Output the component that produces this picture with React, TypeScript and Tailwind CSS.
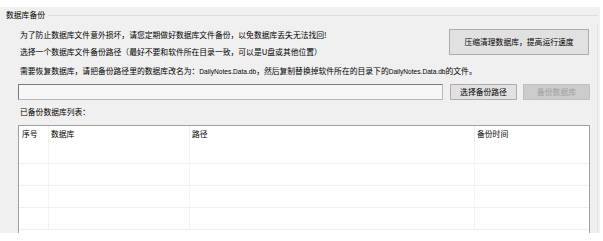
import React from 'react';

const cjk = { fontFamily: '"Noto Sans CJK SC", "Microsoft YaHei", sans-serif' };

function Latin({ children }: { children: React.ReactNode }) {
  return <span className="text-[6.6px] font-['Liberation_Sans',sans-serif]">{children}</span>;
}

const rows = [0, 1, 2, 3];

export default function App() {
  return (
    <div className="w-[603px] h-[241px] bg-white pt-[7px] overflow-hidden text-[#000]" style={cjk}>
      <div className="w-[600px] h-[226px] bg-[#f0f0f0] flex flex-col overflow-hidden text-[7.8px]">
        {/* group title */}
        <div className="h-[16px] flex items-center">
          <span className="pl-[6px] pr-[3px] leading-[16px]">数据库备份</span>
          <div className="flex-1 border-t border-[#dcdcdc] mr-[2px]" />
        </div>

        <div className="flex flex-col border-r border-[#e3e3e3] mr-[2px] flex-1">
          {/* intro + compact button */}
          <div className="flex">
            <div className="flex-1 flex flex-col pl-[20px] pt-[4px]">
              <div className="h-[16px] leading-[16px]">为了防止数据库文件意外损坏，请您定期做好数据库文件备份，以免数据库丢失无法找回!</div>
              <div className="h-[16px] leading-[16px] mt-[1px]">选择一个数据库文件备份路径（最好不要和软件所在目录一致，可以是U盘或其他位置）</div>
            </div>
            <button className="mt-[6px] mr-[8px] w-[140px] h-[26px] bg-[#e1e1e1] border border-[#adadad] text-[7.8px] text-[#000]">
              压缩清理数据库，提高运行速度
            </button>
          </div>

          <div className="h-[16px] leading-[16px] pl-[20px] mt-[3px] whitespace-nowrap">
            需要恢复数据库，请把备份路径里的数据库改名为：<Latin>DailyNotes.Data.db</Latin>，然后复制替换掉软件所在的目录下的<Latin>DailyNotes.Data.db</Latin>的文件。
          </div>

          {/* path input row */}
          <div className="flex items-center pl-[18px] mt-[5px]">
            <div className="w-[425px] h-[16px] bg-[#f7f7f7] border border-[#7a7a7a] border-b-[#b9b9b9] border-r-[#b9b9b9]" />
            <button className="ml-[7px] w-[67px] h-[16px] bg-[#e1e1e1] border border-[#adadad] text-[7.8px] leading-[14px] text-[#000]">
              选择备份路径
            </button>
            <button className="ml-[6px] w-[67px] h-[16px] bg-[#cccccc] border border-[#bfbfbf] text-[7.8px] leading-[14px] text-[#a0a0a0]">
              备份数据库
            </button>
          </div>

          <div className="h-[16px] leading-[16px] pl-[20px] mt-[4px]">已备份数据库列表：</div>

          {/* list */}
          <div className="ml-[18px] mt-[5px] w-[572px] flex-1 bg-white border border-[#a0a0a0] border-b-0 flex flex-col">
            <div className="grid grid-cols-[30px_141px_285px_1fr] h-[16px]">
              <div className="pl-[3px] leading-[16px] border-r border-[#f0f0f0]">序号</div>
              <div className="pl-[2px] leading-[16px] border-r border-[#f0f0f0]">数据库</div>
              <div className="pl-[2px] leading-[16px] border-r border-[#f0f0f0]">路径</div>
              <div className="pl-[2px] leading-[16px]">备份时间</div>
            </div>
            {rows.map((r) => (
              <div
                key={r}
                className={`grid grid-cols-[30px_141px_285px_1fr] border-b border-[#f0f0f0] ${r === 0 ? 'h-[22px]' : 'h-[22px]'}`}
              >
                <div className="border-r border-[#f3f3f3]" />
                <div className="border-r border-[#f3f3f3]" />
                <div className="border-r border-[#f3f3f3]" />
                <div />
              </div>
            ))}
          </div>
        </div>
      </div>
    </div>
  );
}
